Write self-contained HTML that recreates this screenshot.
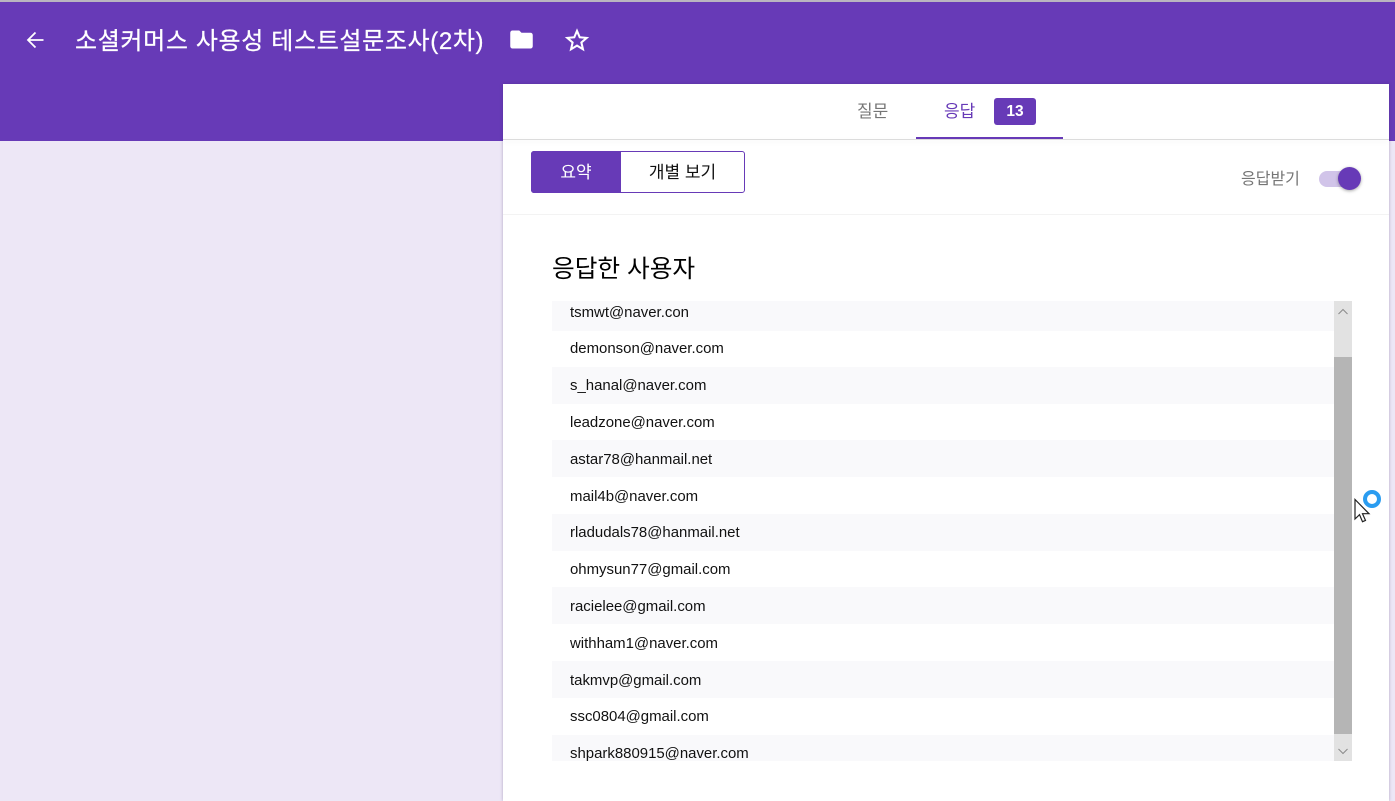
<!DOCTYPE html>
<html lang="ko"><head><meta charset="utf-8"><title>응답</title>
<style>
*{box-sizing:border-box}
html,body{margin:0;padding:0;width:1395px;height:801px;overflow:hidden;background:#ede7f6;font-family:"Liberation Sans","Noto Sans CJK KR",sans-serif;color:#000}
.a{position:absolute;white-space:nowrap}
#hd{left:0;top:0;width:1395px;height:141px;background:#673ab7;border-top:2px solid #b9b5c0}
#panel{left:503px;top:84px;width:886px;height:717px;background:#fff;box-shadow:0 0 3px rgba(60,40,100,.35)}
.row{position:absolute;left:552px;width:782px;height:36.8px;line-height:38.8px;padding-left:18px;font-size:14.950px;color:#111}
.d{line-height:40.8px}
.st{background:#f9f9fb}
</style></head><body>
<div class="a" id="hd"></div>
<svg class="a" style="left:23px;top:28px" width="24" height="24" viewBox="0 0 24 24"><path d="M20.500 12H5M12.500 4.500L5 12l7.500 7.500" fill="none" stroke="#fff" stroke-width="1.800"/></svg>
<div class="a" style="left:75px;top:25px;font-size:24px;line-height:34px;color:#fff;letter-spacing:.63px;-webkit-text-stroke:.25px #fff">소셜커머스 사용성 테스트설문조사(2차)</div>
<svg class="a" style="left:508px;top:26px" width="27" height="27" viewBox="0 0 24 24"><path d="M10 4H4c-1.1 0-2 .9-2 2v12c0 1.100.9 2 2 2h16c1.100 0 2-.9 2-2V8c0-1.100-.9-2-2-2h-8z" fill="#fff"/></svg>
<svg class="a" style="left:564px;top:27px" width="26" height="26" viewBox="0 0 24 24"><path d="M12 3.600l2.500 5.900 6.400.55-4.850 4.200 1.450 6.250L12 17.200l-5.500 3.300 1.450-6.250L3.100 10.050l6.400-.55z" fill="none" stroke="#fff" stroke-width="1.900"/></svg>
<div class="a" id="panel"></div>
<div class="a" style="left:503px;top:139px;width:886px;height:1px;background:#dcdcdc;box-shadow:0 2px 5px rgba(0,0,0,.08)"></div>
<div class="a" style="left:857px;top:100px;font-size:17px;line-height:24px;color:#757575">질문</div>
<div class="a" style="left:944px;top:100px;font-size:17px;line-height:24px;color:#673ab7">응답</div>
<div class="a" style="left:994px;top:98px;width:42px;height:27px;border-radius:3px;background:#673ab7;color:#fff;font-size:15.500px;font-weight:700;line-height:28px;text-align:center">13</div>
<div class="a" style="left:916px;top:137px;width:147px;height:2px;background:#673ab7"></div>
<div class="a" style="left:531px;top:151px;width:214px;height:42px;border:1px solid #673ab7;border-radius:3px;background:#fff"></div>
<div class="a" style="left:531px;top:153px;width:90px;height:40px;color:#fff;font-size:17px;line-height:40px;text-align:center;z-index:2">요약</div>
<div class="a" style="left:531px;top:151px;width:90px;height:42px;border-radius:3px 0 0 3px;background:#673ab7"></div>
<div class="a" style="left:621px;top:153px;width:123px;height:38px;font-size:17px;line-height:40px;text-align:center;color:#111">개별 보기</div>
<div class="a" style="left:1241px;top:168px;font-size:16px;line-height:24px;color:#757575">응답받기</div>
<div class="a" style="left:1319px;top:171px;width:34px;height:16px;border-radius:8px;background:#d1c4e9"></div>
<div class="a" style="left:1338px;top:167px;width:23px;height:23px;border-radius:50%;background:#673ab7;box-shadow:0 1px 3px rgba(0,0,0,.35)"></div>
<div class="a" style="left:503px;top:214px;width:886px;height:1px;background:#f3f3f3"></div>
<div class="a" style="left:552px;top:253px;font-size:24.700px;line-height:34px;color:#000">응답한 사용자</div>
<div class="a" style="left:552px;top:301px;width:800px;height:460px;overflow:hidden" id="clip">
<div class="row st" style="left:0;top:-7px">tsmwt@naver.con</div>
<div class="row" style="left:0;top:29px">demonson@naver.com</div>
<div class="row st" style="left:0;top:66px">s_hanal@naver.com</div>
<div class="row" style="left:0;top:103px">leadzone@naver.com</div>
<div class="row st d" style="left:0;top:139px">astar78@hanmail.net</div>
<div class="row d" style="left:0;top:176px">mail4b@naver.com</div>
<div class="row st" style="left:0;top:213px">rladudals78@hanmail.net</div>
<div class="row" style="left:0;top:250px">ohmysun77@gmail.com</div>
<div class="row st d" style="left:0;top:286px">racielee@gmail.com</div>
<div class="row d" style="left:0;top:323px">withham1@naver.com</div>
<div class="row st d" style="left:0;top:360px">takmvp@gmail.com</div>
<div class="row" style="left:0;top:397px">ssc0804@gmail.com</div>
<div class="row st" style="left:0;top:434px">shpark880915@naver.com</div>
<div class="a" style="left:782px;top:0;width:18px;height:460px;background:#e2e2e2"></div>
<div class="a" style="left:782px;top:56px;width:18px;height:377px;background:#b5b5b5"></div>
<svg class="a" style="left:782px;top:0" width="18" height="18"><path d="M4.500 13L9 8.500 13.500 13" fill="none" stroke="#8a8a8a" stroke-width="1"/></svg>
<svg class="a" style="left:782px;top:442px" width="18" height="18"><path d="M4.500 6L9 10.500 13.500 6" fill="none" stroke="#8a8a8a" stroke-width="1"/></svg>
</div>
<svg class="a" style="left:1352px;top:488px" width="32" height="38" viewBox="0 0 32 38">
<circle cx="20" cy="11" r="7" fill="none" stroke="#2a9cf0" stroke-width="4"/>
<path d="M3 11.500V31l4.500-4.300 3 7 3-1.300-3-6.700H17z" fill="#fff" stroke="#222" stroke-width="1.200"/>
</svg>
</body></html>
